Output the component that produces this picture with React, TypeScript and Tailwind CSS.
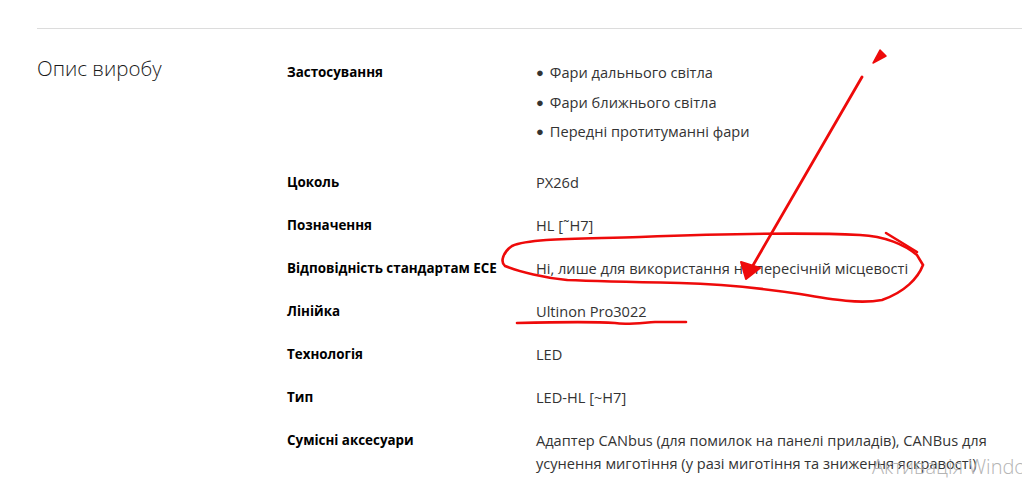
const rows: { label: string; value: string | string[] }[] = [
  {
    label: "Застосування",
    value: [
      "Фари дальнього світла",
      "Фари ближнього світла",
      "Передні протитуманні фари",
    ],
  },
  { label: "Цоколь", value: "PX26d" },
  { label: "Позначення", value: "HL [˜H7]" },
  {
    label: "Відповідність стандартам ECE",
    value: "Ні, лише для використання на пересічній місцевості",
  },
  { label: "Лінійка", value: "Ultinon Pro3022" },
  { label: "Технологія", value: "LED" },
  { label: "Тип", value: "LED-HL [~H7]" },
  {
    label: "Сумісні аксесуари",
    value:
      "Адаптер CANbus (для помилок на панелі приладів), CANBus для усунення миготіння (у разі миготіння та зниження яскравості)",
  },
];

function Annotations() {
  return (
    <svg
      className="absolute inset-0 pointer-events-none"
      width="1022"
      height="483"
      viewBox="0 0 1022 483"
      fill="none"
    >
      {/* loop around ECE value */}
      <path
        d="M 567 280 C 545 278, 520 272, 505 266 C 500 262, 503 252, 512 246 C 530 238, 580 239, 640 237 C 720 234, 800 232, 860 235 C 885 236, 905 245, 917 255 L 923 265 C 918 278, 905 292, 882 300 C 860 304, 835 300, 800 294 C 760 288, 720 284, 680 283 C 630 282, 590 281, 567 280"
        stroke="#ee0a0a"
        strokeWidth="2.6"
        strokeLinecap="round"
      />
      <path d="M 886 233 L 917 252" stroke="#ee0a0a" strokeWidth="2.6" strokeLinecap="round" />
      {/* arrow */}
      <path d="M 862 77 L 748 274" stroke="#ee0a0a" strokeWidth="2.8" strokeLinecap="round" />
      <path d="M 741 262 L 746 279 L 760 268 Z" fill="#ee0a0a" stroke="#ee0a0a" strokeWidth="2" strokeLinejoin="round" />
      <path d="M 873 63 L 880 50 L 886 56 Z" fill="#ee0a0a" stroke="#ee0a0a" strokeWidth="1.5" strokeLinejoin="round" />
      {/* underline */}
      <path
        d="M 517 323 C 560 322, 600 322, 615 323 C 625 325, 640 323, 655 322 L 686 322"
        stroke="#ee0a0a"
        strokeWidth="2.6"
        strokeLinecap="round"
      />
    </svg>
  );
}

export default function App() {
  return (
    <div className="relative h-[483px] w-[1022px] overflow-hidden bg-white font-['Open_Sans',sans-serif] text-[#222]">
      <section className="pt-[28px] pl-[37px]">
        <div className="flex border-t border-[#dcdcdc] pt-[22px]">
          <h2 className="w-[250px] shrink-0 pt-[3px] text-[20.5px] font-light leading-[28px] text-[#1a1a1a]">
            Опис виробу
          </h2>
          <dl className="flex flex-1 flex-col">
            {rows.map((row) => (
              <div key={row.label} className="grid grid-cols-[249px_1fr] py-[10px]">
                <dt className="whitespace-nowrap text-[13.4px] font-bold leading-[23px] text-black">
                  {row.label}
                </dt>
                <dd className="pr-[8px] text-[14.6px] leading-[23px] text-[#333]">
                  {Array.isArray(row.value) ? (
                    <ul className="mb-[8px] flex flex-col gap-[6.5px]">
                      {row.value.map((item) => (
                        <li key={item} className="flex items-center gap-[6px]">
                          <span className="text-[13px] leading-none text-[#333]">●</span>
                          {item}
                        </li>
                      ))}
                    </ul>
                  ) : (
                    row.value
                  )}
                </dd>
              </div>
            ))}
          </dl>
        </div>
      </section>
      <Annotations />
      <p className="absolute left-[872px] top-[452px] whitespace-nowrap text-[20px] font-light text-[#b4b4b4]">
        Активація Windows
      </p>
    </div>
  );
}
